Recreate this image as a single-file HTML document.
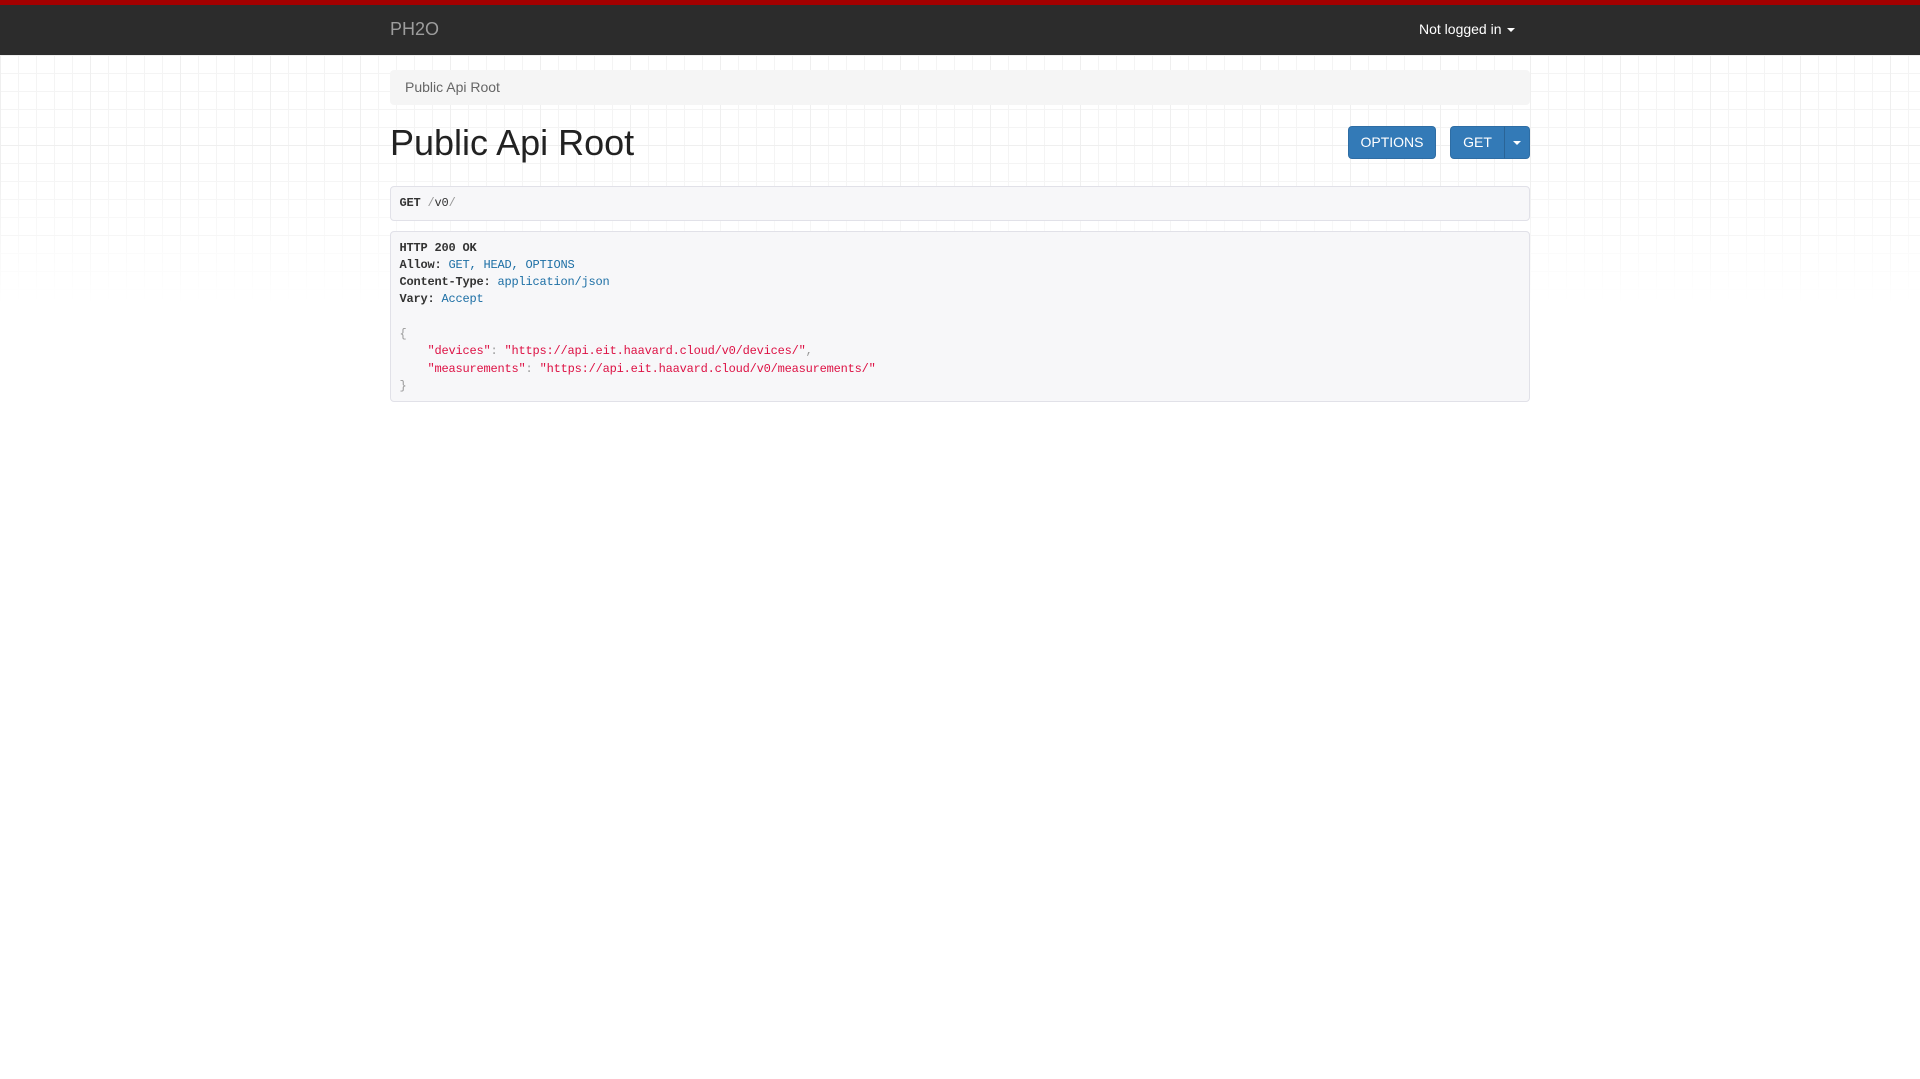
<!DOCTYPE html>
<html><head><meta charset="utf-8">
<style>
*{box-sizing:border-box}
html,body{margin:0;padding:0;width:1920px;height:1079px;overflow:hidden;background:#fff;font-family:"Liberation Sans",Helvetica,Arial,sans-serif;font-size:14px;color:#333}
.grid{position:absolute;left:0;top:55px;width:1920px;height:250px;
background-image:
linear-gradient(to right,#efefef 1px,transparent 1px),
linear-gradient(to bottom,#efefef 1px,transparent 1px),
linear-gradient(to right,#f4f4f4 1px,transparent 1px),
linear-gradient(to bottom,#f4f4f4 1px,transparent 1px);
background-size:90px 90px,90px 90px,18px 18px,18px 18px;
-webkit-mask-image:linear-gradient(to bottom,#000 0,#000 120px,rgba(0,0,0,0) 250px);
mask-image:linear-gradient(to bottom,#000 0,#000 120px,rgba(0,0,0,0) 250px);}
.red{position:absolute;left:0;top:0;width:1920px;height:5px;background:#a30000}
.nav{position:absolute;left:0;top:5px;width:1920px;height:50px;background:#2c2c2c}
.brand{position:absolute;left:390px;top:14px;font-size:18px;color:#9d9d9d;line-height:20px}
.user{position:absolute;left:1419px;top:14px;font-size:14px;color:#fff;line-height:20px}
.caret{display:inline-block;width:0;height:0;border-top:4px solid #fff;border-left:4px solid transparent;border-right:4px solid transparent;vertical-align:middle;margin-left:5px}
.bc{position:absolute;left:390px;top:70px;width:1140px;height:35px;background:#f5f5f5;border-radius:4px;padding:7px 15px;line-height:20px;color:#666}
h1{position:absolute;left:390px;top:123px;margin:0;font-size:36px;font-weight:500;line-height:40px;color:#222}
.btn{position:absolute;top:126px;height:33px;background:#337ab7;border:1px solid #2e6da4;color:#fff;font-size:14px;line-height:31px;text-align:center;border-radius:4px}
pre{margin:0;position:absolute;left:390px;width:1140px;background:#f7f7f9;border:1px solid #e1e1e8;border-radius:4px;padding:7.5px 8.5px;font-family:"Liberation Mono",Menlo,monospace;font-size:12px;letter-spacing:-0.2px;line-height:17.3px;color:#333;white-space:pre}
b{font-weight:bold}
.l{color:#1d6fa5}
.s{color:#d14}
.p{color:#999}
</style></head><body>
<div class="grid"></div>
<div class="red"></div>
<div class="nav"><div class="brand">PH2O</div><div class="user">Not logged in<span class="caret"></span></div></div>
<div class="bc">Public Api Root</div>
<h1>Public Api Root</h1>
<div class="btn" style="left:1348px;width:88px">OPTIONS</div>
<div class="btn" style="left:1450px;width:55px;border-radius:4px 0 0 4px">GET</div>
<div class="btn" style="left:1504px;width:26px;border-radius:0 4px 4px 0;border-left-color:#2a6496"><span class="caret" style="margin:0"></span></div>
<pre style="top:186px;height:35px;line-height:17px"><b>GET</b> <span class="p">/</span>v0<span class="p">/</span></pre>
<pre style="top:231px;height:171px"><b>HTTP 200 OK</b>
<b>Allow:</b> <span class="l">GET, HEAD, OPTIONS</span>
<b>Content-Type:</b> <span class="l">application/json</span>
<b>Vary:</b> <span class="l">Accept</span>

<span class="p">{</span>
    <span class="s">"devices"</span><span class="p">: </span><span class="s">"https://api.eit.haavard.cloud/v0/devices/"</span><span class="p">,</span>
    <span class="s">"measurements"</span><span class="p">: </span><span class="s">"https://api.eit.haavard.cloud/v0/measurements/"</span>
<span class="p">}</span></pre>
</body></html>
